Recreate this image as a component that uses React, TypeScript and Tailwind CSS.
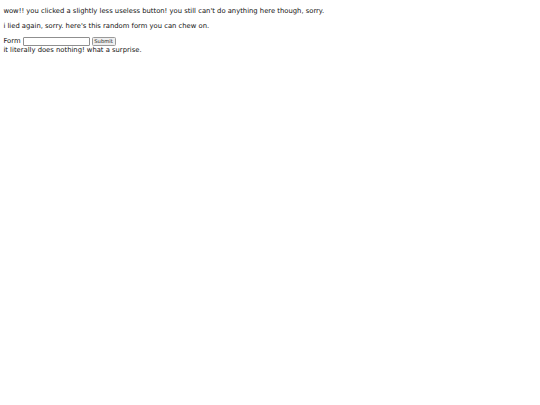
export default function App() {
  return (
    <div className="min-h-[405px] bg-white px-[3.4px] pt-px text-[6.8px] leading-[8px] text-[#111]" style={{ fontFamily: '"DejaVu Sans", Verdana, sans-serif' }}>
      <p className="mb-[6.8px] mt-[5.8px]">wow!! you clicked a slightly less useless button! you still can't do anything here though, sorry.</p>
      <p className="my-[6.8px]">i lied again, sorry. here's this random form you can chew on.</p>
      <form className="m-0" onSubmit={(e) => e.preventDefault()}>
        <div className="flex h-[10px] items-center gap-[2px]">
          <label>Form</label>
          <input type="text" className="h-[9px] w-[67px] rounded-[1px] border border-[#8f8f8f] bg-white px-[1px] text-[5.4px]" />
          <button type="submit" className="h-[9px] w-[24px] rounded-[1.5px] border border-[#9a9a9a] bg-[#efefef] text-[5.2px] leading-none text-[#222]">Submit</button>
        </div>
        <div>it literally does nothing! what a surprise.</div>
      </form>
    </div>
  );
}
